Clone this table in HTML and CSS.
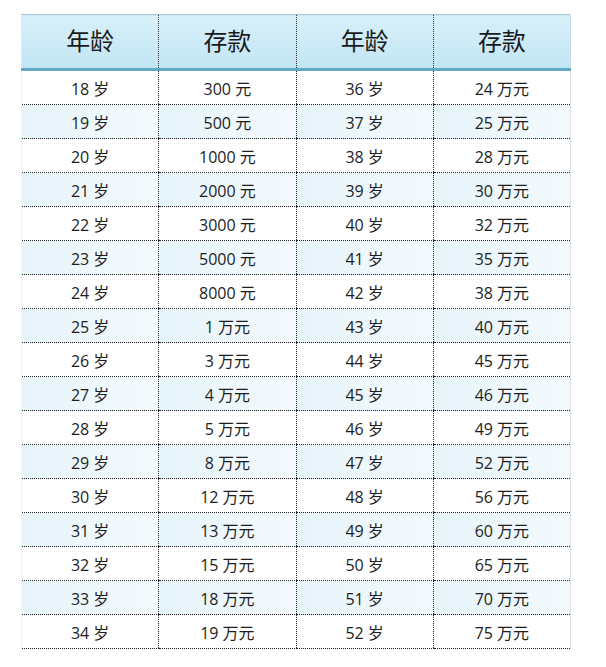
FILE: index.html
```html
<!DOCTYPE html>
<html lang="zh">
<head>
<meta charset="utf-8">
<link rel="stylesheet" href="styles.css">
</head>
<body>
<div class="page">
<table class="tbl">
<thead>
<tr><th>年龄</th><th>存款</th><th>年龄</th><th>存款</th></tr>
</thead>
<tbody>
<tr><td>18 岁</td><td>300 元</td><td>36 岁</td><td>24 万元</td></tr>
<tr><td>19 岁</td><td>500 元</td><td>37 岁</td><td>25 万元</td></tr>
<tr><td>20 岁</td><td>1000 元</td><td>38 岁</td><td>28 万元</td></tr>
<tr><td>21 岁</td><td>2000 元</td><td>39 岁</td><td>30 万元</td></tr>
<tr><td>22 岁</td><td>3000 元</td><td>40 岁</td><td>32 万元</td></tr>
<tr><td>23 岁</td><td>5000 元</td><td>41 岁</td><td>35 万元</td></tr>
<tr><td>24 岁</td><td>8000 元</td><td>42 岁</td><td>38 万元</td></tr>
<tr><td>25 岁</td><td>1 万元</td><td>43 岁</td><td>40 万元</td></tr>
<tr><td>26 岁</td><td>3 万元</td><td>44 岁</td><td>45 万元</td></tr>
<tr><td>27 岁</td><td>4 万元</td><td>45 岁</td><td>46 万元</td></tr>
<tr><td>28 岁</td><td>5 万元</td><td>46 岁</td><td>49 万元</td></tr>
<tr><td>29 岁</td><td>8 万元</td><td>47 岁</td><td>52 万元</td></tr>
<tr><td>30 岁</td><td>12 万元</td><td>48 岁</td><td>56 万元</td></tr>
<tr><td>31 岁</td><td>13 万元</td><td>49 岁</td><td>60 万元</td></tr>
<tr><td>32 岁</td><td>15 万元</td><td>50 岁</td><td>65 万元</td></tr>
<tr><td>33 岁</td><td>18 万元</td><td>51 岁</td><td>70 万元</td></tr>
<tr><td>34 岁</td><td>19 万元</td><td>52 岁</td><td>75 万元</td></tr>
</tbody>
</table>
</div>
</body>
</html>
```
FILE: styles.css
```css
html, body {
  margin: 0;
  padding: 0;
  background: #ffffff;
}
.page {
  padding: 14px 0 0 21px;
}
.tbl {
  width: 550px;
  border-collapse: collapse;
  table-layout: fixed;
  font-family: "Open Sans", "Noto Sans CJK SC", sans-serif;
  color: #1e1e1e;
}
.tbl th {
  height: 49px;
  padding: 0 0 4px;
  font-size: 24px;
  font-weight: 400;
  font-family: "Noto Sans CJK SC", sans-serif;
  background: linear-gradient(to bottom, #d8f0fa, #c2e5f4);
  border-top: 1px solid #a9c6d2;
  border-bottom: 3px solid #5fa9c5;
  border-left: 1px dotted #333;
  color: #1a1a1a;
}
.tbl th:first-child {
  border-left: 1px solid #d9edf5;
}
.tbl th:last-child {
  border-right: 1px solid #c9dde6;
}
.tbl td {
  height: 33px;
  padding: 0;
  text-align: center;
  font-size: 16px;
  border-bottom: 1px dotted #222;
  border-left: 1px dotted #222;
}
.tbl td:first-child {
  border-left: 1px solid #eef3f6;
}
.tbl td:last-child {
  border-right: 1px solid #d9e3e8;
}
.tbl tbody tr:nth-child(even) td {
  background: linear-gradient(to right, #e6f4fa, #f4fafd);
}
```
